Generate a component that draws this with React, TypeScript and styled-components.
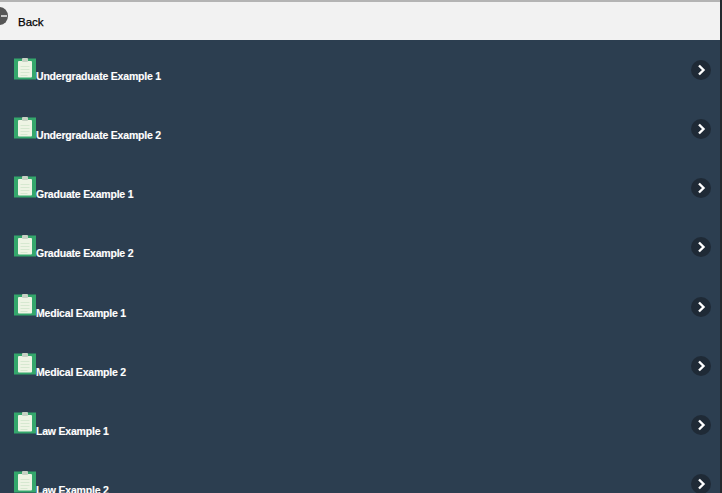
import React from "react";
import styled, { createGlobalStyle } from "styled-components";

const Global = createGlobalStyle`
  html, body { margin: 0; padding: 0; height: 100%; overflow: hidden; background: #2c3e50; }
  #root { height: 100%; }
`;

const Page = styled.div`
  width: 722px;
  height: 493px;
  overflow: hidden;
  display: flex;
  flex-direction: column;
  background: #2c3e50;
  font-family: "Liberation Sans", Arial, sans-serif;
  border-right: 2px solid #23282e;
  box-sizing: border-box;
`;

const Header = styled.header`
  flex: none;
  height: 40px;
  box-sizing: border-box;
  border-top: 2px solid #b4b4b4;
  background: #f2f2f2;
  display: flex;
  align-items: center;
  position: relative;
  padding: 2px 0 0 18px;
`;

const BackBadge = styled.span`
  position: absolute;
  left: -8px;
  top: 5px;
  width: 16px;
  height: 18px;
  border-radius: 50%;
  background: #565656;
  display: flex;
  align-items: center;
  justify-content: center;
  &::after {
    content: "";
    margin-left: 8px;
    width: 6px;
    height: 2px;
    background: #c8c8c8;
  }
`;

const BackLabel = styled.span`
  font-size: 11.5px;
  font-weight: 400;
  color: #000;
  -webkit-text-stroke: 0.25px #000;
`;

const List = styled.ul`
  list-style: none;
  margin: 0;
  padding: 0;
  flex: 1;
  overflow: hidden;
`;

const Row = styled.li`
  height: 59.14px;
  box-sizing: border-box;
  padding: 17.5px 9px 0 14px;
  display: flex;
  align-items: flex-start;
`;

const Title = styled.span`
  font-size: 10.5px;
  font-weight: 700;
  line-height: 13px;
  letter-spacing: -0.2px;
  color: #fff;
  margin-top: 12.5px;
  flex: 1;
  white-space: nowrap;
  -webkit-text-stroke: 0.15px #fff;
`;

const Arrow = styled.span`
  flex: none;
  width: 20px;
  height: 20px;
  margin-top: 2.5px;
  border-radius: 50%;
  background: #1f2a36;
  display: flex;
  align-items: center;
  justify-content: center;
`;

const Clipboard = () => (
  <svg width="22" height="23" viewBox="0 0 22 23" style={{ flex: "none" }}>
    <rect x="0" y="0.5" width="22" height="21" fill="#35a76c" />
    <rect x="4" y="3" width="14" height="16.5" rx="1" fill="#eef4e4" />
    <rect x="8" y="0" width="6" height="4" rx="1" fill="#c7d2c4" />
    <path d="M6.5 8.5h9M6.5 11.5h9M6.5 14.5h9M6.5 17.5h7" stroke="#d6e8d0" strokeWidth="1" />
  </svg>
);

const Chevron = () => (
  <svg width="10" height="12" viewBox="0 0 10 12">
    <path d="M3 1.5 7.5 6 3 10.5" fill="none" stroke="#fff" strokeWidth="2.4" />
  </svg>
);

const items = [
  "Undergraduate Example 1",
  "Undergraduate Example 2",
  "Graduate Example 1",
  "Graduate Example 2",
  "Medical Example 1",
  "Medical Example 2",
  "Law Example 1",
  "Law Example 2",
];

export default function App() {
  return (
    <Page>
      <Global />
      <Header>
        <BackBadge />
        <BackLabel>Back</BackLabel>
      </Header>
      <List>
        {items.map((t) => (
          <Row key={t}>
            <Clipboard />
            <Title>{t}</Title>
            <Arrow>
              <Chevron />
            </Arrow>
          </Row>
        ))}
      </List>
    </Page>
  );
}
